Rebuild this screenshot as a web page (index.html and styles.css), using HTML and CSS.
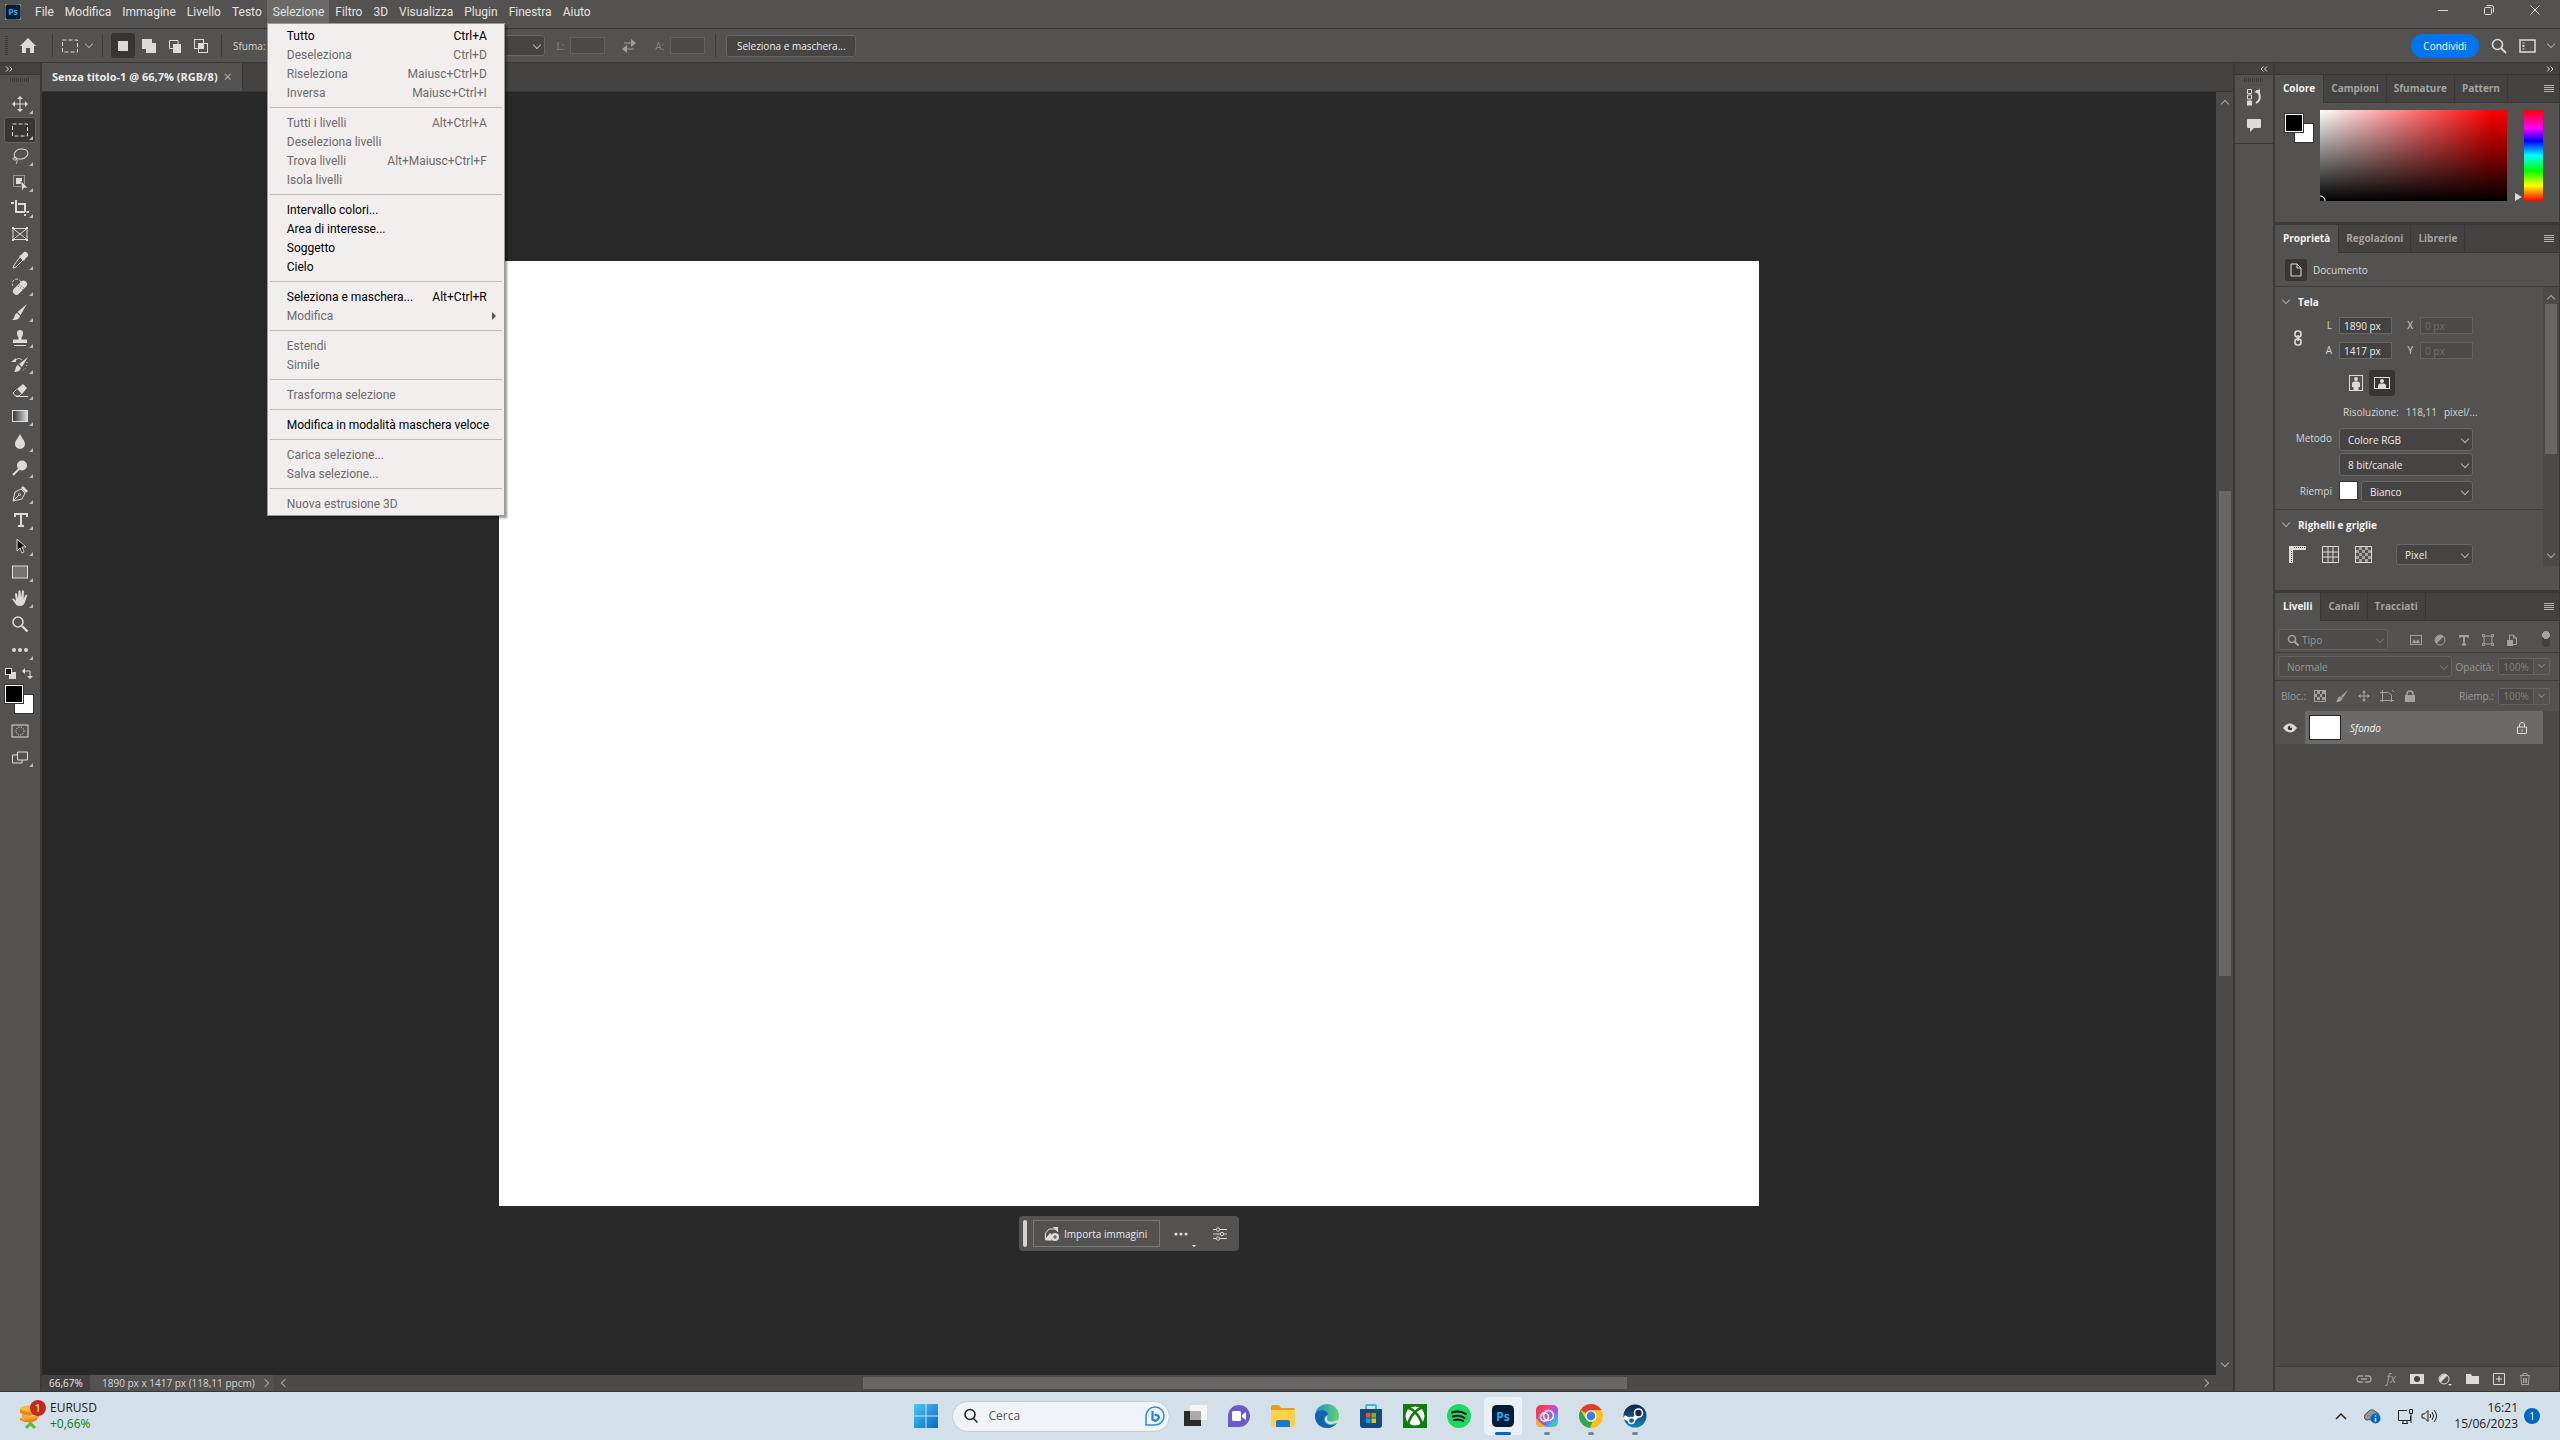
FILE: index.html
```html
<!DOCTYPE html>
<html lang="it">
<head>
    <meta charset="utf-8">
    <title>Senza titolo-1 @ 66,7% (RGB/8)</title>
    <link rel="stylesheet" href="styles.css">
</head>
<body>

    <!-- Menu bar -->
    <header class="menubar">
        <svg class="ps-logo" width="16" height="16" viewBox="0 0 24 24"><rect width="24" height="24" rx="4" fill="#001e36"/><text x="12" y="17" text-anchor="middle" class="logo-text">Ps</text></svg>
        <nav class="menus">
            <button>File</button>
            <button>Modifica</button>
            <button>Immagine</button>
            <button>Livello</button>
            <button>Testo</button>
            <div class="menu-open">
                <button class="current">Selezione</button>
                <ul class="dropdown">
                    <li><button>Tutto <span>Ctrl+A</span></button></li>
                    <li><button disabled>Deseleziona <span>Ctrl+D</span></button></li>
                    <li><button disabled>Riseleziona <span>Maiusc+Ctrl+D</span></button></li>
                    <li><button disabled>Inversa <span>Maiusc+Ctrl+I</span></button></li>
                    <li class="sep"></li>
                    <li><button disabled>Tutti i livelli <span>Alt+Ctrl+A</span></button></li>
                    <li><button disabled>Deseleziona livelli</button></li>
                    <li><button disabled>Trova livelli <span>Alt+Maiusc+Ctrl+F</span></button></li>
                    <li><button disabled>Isola livelli</button></li>
                    <li class="sep"></li>
                    <li><button>Intervallo colori...</button></li>
                    <li><button>Area di interesse...</button></li>
                    <li><button>Soggetto</button></li>
                    <li><button>Cielo</button></li>
                    <li class="sep"></li>
                    <li><button>Seleziona e maschera... <span>Alt+Ctrl+R</span></button></li>
                    <li><button class="has-sub" disabled>Modifica</button></li>
                    <li class="sep"></li>
                    <li><button disabled>Estendi</button></li>
                    <li><button disabled>Simile</button></li>
                    <li class="sep"></li>
                    <li><button disabled>Trasforma selezione</button></li>
                    <li class="sep"></li>
                    <li><button>Modifica in modalità maschera veloce</button></li>
                    <li class="sep"></li>
                    <li><button disabled>Carica selezione...</button></li>
                    <li><button disabled>Salva selezione...</button></li>
                    <li class="sep"></li>
                    <li><button disabled>Nuova estrusione 3D</button></li>
                </ul>
            </div>
            <button>Filtro</button>
            <button>3D</button>
            <button>Visualizza</button>
            <button>Plugin</button>
            <button>Finestra</button>
            <button>Aiuto</button>
        </nav>
        <div class="window-buttons">
            <button aria-label="Riduci"><svg width="12" height="12" viewBox="0 0 12 12"><path d="M1 6.5h10"/></svg></button>
            <button aria-label="Ripristina"><svg width="12" height="12" viewBox="0 0 12 12"><rect x="1.5" y="3.5" width="7" height="7" rx="1"/><path d="M3.5 1.5h5a2 2 0 0 1 2 2v5"/></svg></button>
            <button aria-label="Chiudi"><svg width="12" height="12" viewBox="0 0 12 12"><path d="M1.5 1.5l9 9M10.5 1.5l-9 9"/></svg></button>
        </div>
    </header>

    <!-- Options bar -->
    <div class="options">
        <span class="grip-v"></span>
        <button class="opt-home" aria-label="Home"><svg width="18" height="18" viewBox="0 0 18 18"><path class="fill" d="M9 1L1 9h2v7h4v-5h4v5h4V9h2z"/></svg></button>
        <span class="divider"></span>
        <button class="opt-tool" aria-label="Selezione rettangolare"><svg width="18" height="16" viewBox="0 0 18 16"><rect x="1.5" y="2" width="15" height="12" stroke-dasharray="4 2"/></svg><i class="chevron"></i></button>
        <span class="divider"></span>
        <div class="modes">
            <button class="on" aria-label="Nuova selezione"><svg width="16" height="16" viewBox="0 0 16 16"><rect class="fill" x="3" y="3" width="10" height="10"/></svg></button>
            <button aria-label="Aggiungi"><svg width="16" height="16" viewBox="0 0 16 16"><path class="fill" d="M1 1h10v4h4v10H5v-4H1z"/></svg></button>
            <button aria-label="Sottrai"><svg width="16" height="16" viewBox="0 0 16 16"><path class="fill" d="M6 6h8v9H6z"/><path d="M11 6V2.5H2.5v8H6"/></svg></button>
            <button aria-label="Interseca"><svg width="16" height="16" viewBox="0 0 16 16"><rect x="1.5" y="1.5" width="9" height="9"/><rect x="5.5" y="5.5" width="9" height="9"/><path class="fill" d="M6 6h4v4H6z"/></svg></button>
        </div>
        <span class="divider"></span>
        <label for="feather">Sfuma:</label>
        <input id="feather" class="field feather" value="0 px">
        <span class="select style-select"><select aria-label="Stile"><option>Normale</option></select></span>
        <label class="dim" for="opt-w">L:</label>
        <input id="opt-w" class="field small dim-field" disabled>
        <svg class="swap" width="16" height="14" viewBox="0 0 16 14"><path d="M3 4h9M13 10H4"/><path class="fill" d="M10 0l5 4-5 4zM6 6l-5 4 5 4z"/></svg>
        <label class="dim" for="opt-h">A:</label>
        <input id="opt-h" class="field small dim-field" disabled>
        <span class="divider"></span>
        <button class="mask-btn">Seleziona e maschera...</button>
        <div class="options-right">
            <button class="share">Condividi</button>
            <svg width="16" height="16" viewBox="0 0 16 16"><circle cx="6.5" cy="6.5" r="5" stroke-width="1.6"/><path d="M10 10l5 5" stroke-width="1.8"/></svg>
            <svg width="17" height="14" viewBox="0 0 17 14"><rect x="1" y="1" width="15" height="12" stroke-width="1.5"/><path d="M4.5 3.5v1M4.5 6v2M4.5 9.5v1" stroke-width="2"/></svg>
            <i class="chevron"></i>
        </div>
    </div>

    <main class="workspace">

        <!-- Tools -->
        <aside class="toolbar">
            <div class="dock-head left"><svg width="8" height="6" viewBox="0 0 8 6"><path d="M1 .5l2.5 2.5L1 5.5M4.5.5L7 3 4.5 5.5"/></svg></div>
            <span class="grip-h"></span>
            <button aria-label="Sposta"><svg width="18" height="18" viewBox="0 0 18 18"><path d="M9 2v14M2 9h14"/><path class="fill" d="M9 1l3 3H6zM9 17l3-3H6zM1 9l3-3v6zM17 9l-3-3v6z"/></svg></button>
            <button class="on" aria-label="Selezione rettangolare"><svg width="18" height="18" viewBox="0 0 18 18"><rect x="1.5" y="3" width="15" height="12" stroke-dasharray="4 2"/></svg></button>
            <button aria-label="Lazo"><svg width="18" height="18" viewBox="0 0 18 18"><ellipse cx="10" cy="7" rx="7" ry="5" transform="rotate(-12 10 7)"/><path d="M4 10c-3 1-2 3 0 3s2-3-1-2M5 12c2 1 1 3 0 5"/></svg></button>
            <button aria-label="Selezione oggetto"><svg width="18" height="18" viewBox="0 0 18 18"><rect x="2.5" y="2.5" width="11" height="11" stroke-dasharray="1 1"/><path class="fill" d="M5 5h6v6H5z"/><path d="M10 8l7 7h-4l-2 3z" style="fill:#dcdbda;stroke:#535250;stroke-width:.6"/></svg></button>
            <button aria-label="Taglierina"><svg width="18" height="18" viewBox="0 0 18 18"><path d="M0 4h3M5 1v12h9M7 5h7v8M14 15v2M15.5 13H18" stroke-width="2"/></svg></button>
            <button class="plain" aria-label="Cornice"><svg width="18" height="18" viewBox="0 0 18 18"><path d="M2 3.5h14v11H2zM2 3.5l14 11M16 3.5l-14 11"/><path class="fill" d="M1 2h2v2H1zM15 2h2v2h-2zM1 14h2v2H1zM15 14h2v2h-2z"/></svg></button>
            <button aria-label="Contagocce"><svg width="18" height="18" viewBox="0 0 18 18"><path d="M9 6l3 3-7 7-3 1 1-3z"/><path class="fill" d="M8 5l2-1 3-3c2-1 5 2 4 4l-3 3-1 2z"/></svg></button>
            <button aria-label="Pennello correttivo"><svg width="18" height="18" viewBox="0 0 18 18"><path stroke-dasharray="2.5 1.5" d="M2 9a4.5 4.5 0 1 1 8-4"/><rect class="fill" x="0" y="7" width="17" height="7" rx="3.5" transform="rotate(-45 9 10)"/><path stroke="#535250" stroke-dasharray="1 1.5" d="M7 9l5 4M8.5 7.5l5 4"/></svg></button>
            <button aria-label="Pennello"><svg width="18" height="18" viewBox="0 0 18 18"><path class="fill" d="M16 1L6.5 9l3 3zM6 10l3 3c-1 4-4 4-8 4 3-2 2-6 5-7z"/></svg></button>
            <button aria-label="Timbro clone"><svg width="18" height="18" viewBox="0 0 18 18"><path class="fill" d="M7.5 9C7 7 5.5 6 6 4a3 3 0 0 1 6 0c.5 2-1 3-1.5 5v1.5H15q1 0 1 1V14H2v-2.5q0-1 1-1h4.5z"/><path d="M3 16.5h12"/></svg></button>
            <button aria-label="Pennello storia"><svg width="18" height="18" viewBox="0 0 18 18"><path class="fill" d="M17 2L8 9l3 3zM7 10l3 3c-1 3-4 4-7 4 2-2 1-6 4-7zM0 7l5-4v4z"/><path d="M4 6c2-3 5-3 7-1"/><path stroke-dasharray="1 2" d="M16 7c0 4-1 7-5 9"/></svg></button>
            <button aria-label="Gomma"><svg width="18" height="18" viewBox="0 0 18 18"><path class="fill" d="M6 8l6-5 4 4-5 6z"/><path d="M5.5 8.5L2 12l2.5 3H8l3-3"/><path d="M5 15.5h12"/></svg></button>
            <button aria-label="Sfumatura"><svg width="18" height="18" viewBox="0 0 18 18"><defs><linearGradient id="grad"><stop offset="0" stop-color="#333"/><stop offset="1" stop-color="#ddd"/></linearGradient></defs><rect x="1.5" y="3.5" width="15" height="11" style="fill:url(#grad)"/></svg></button>
            <button aria-label="Sfoca"><svg width="18" height="18" viewBox="0 0 18 18"><path class="fill" d="M9 1c2 4 5 7 5 10a5 5 0 0 1-10 0c0-3 3-6 5-10z"/></svg></button>
            <button aria-label="Scherma"><svg width="18" height="18" viewBox="0 0 18 18"><circle class="fill" cx="11" cy="6.5" r="5"/><path d="M8 10l-6 6" stroke-width="2"/></svg></button>
            <button aria-label="Penna"><svg width="18" height="18" viewBox="0 0 18 18"><path d="M2 16l2-9 6-3 4 4-3 6zM2 16l6-6"/><circle cx="8.5" cy="9.5" r="1"/><path class="fill" d="M10 3l2-2 5 5-2 2z"/></svg></button>
            <button aria-label="Testo"><svg width="18" height="18" viewBox="0 0 18 18"><path d="M4 6V3h12v3M10 3v12M7 15h6" stroke-width="2"/></svg></button>
            <button aria-label="Selezione tracciato"><svg width="18" height="18" viewBox="0 0 18 18"><path d="M6 2v12l3-3 2 5 2-1-2-5h4z" style="fill:#111"/></svg></button>
            <button aria-label="Rettangolo"><svg width="18" height="18" viewBox="0 0 18 18"><rect x="1.5" y="3" width="15" height="12" style="fill:#747371"/></svg></button>
            <button aria-label="Mano"><svg width="18" height="18" viewBox="0 0 18 18"><path class="fill" d="M1 10q1-1 2 0l2 2-1-7q1-2 2 0l1 5 .5-8q1-1.5 2 0l.5 7 1-7q1-1.5 2 0l-.5 8 2-4q2-1 1.5 1l-2 6q-1 4-5 4-4 0-5-3z"/></svg></button>
            <button class="plain" aria-label="Zoom"><svg width="18" height="18" viewBox="0 0 18 18"><circle cx="7" cy="7" r="5" stroke-width="1.6"/><path d="M11 11l5.5 5.5" stroke-width="2.4"/></svg></button>
            <button aria-label="Altro"><svg width="18" height="18" viewBox="0 0 18 18"><circle class="fill" cx="3" cy="9" r="2"/><circle class="fill" cx="9" cy="9" r="2"/><circle class="fill" cx="15" cy="9" r="2"/></svg></button>
            <div class="mini-colors">
                <svg width="11" height="11" viewBox="0 0 11 11"><path class="fill" d="M4 4h7v7H4z"/><rect x=".5" y=".5" width="6" height="6" style="fill:#111"/></svg>
                <svg width="11" height="11" viewBox="0 0 11 11"><path d="M2 3h6v6"/><path class="fill" d="M0 3l3-3v6zM8 11l3-3H5z"/></svg>
            </div>
            <div class="swatches"><span class="fore"></span><span class="back"></span></div>
            <button class="plain" aria-label="Maschera veloce"><svg width="18" height="18" viewBox="0 0 18 18"><rect x="1" y="3" width="16" height="12"/><circle cx="9" cy="9" r="4" stroke-dasharray="1.2 1.2"/></svg></button>
            <button aria-label="Modalità schermo"><svg width="18" height="18" viewBox="0 0 18 18"><path d="M6 7H1.5v8H11v-3M6.5 4h10v8h-10z"/></svg></button>
        </aside>

        <!-- Document -->
        <section class="document">
            <div class="doc-tabs"><div class="doc-tab">Senza titolo-1 @ 66,7% (RGB/8) <button aria-label="Chiudi">×</button></div></div>
            <div class="doc-body">
                <div class="stage">
                    <div class="artboard"></div>
                    <div class="context-bar">
                        <span class="handle"></span>
                        <button class="import"><svg width="16" height="16" viewBox="0 0 16 16"><path d="M8 14H1.5V7L5 3h7l2 3"/><path class="fill" d="M2 12l4-5 3 3-2 4H2zM9 1h5v5z"/><circle class="fill" cx="11" cy="11" r="4"/><path stroke="#535250" d="M11 9v4M9 11h4"/></svg>Importa immagini</button>
                        <button class="more" aria-label="Altro"><svg width="14" height="4" viewBox="0 0 14 4"><circle class="fill" cx="2" cy="2" r="1.6"/><circle class="fill" cx="7" cy="2" r="1.6"/><circle class="fill" cx="12" cy="2" r="1.6"/></svg></button>
                        <button class="tune" aria-label="Proprietà"><svg width="16" height="14" viewBox="0 0 16 14"><path d="M1 2.5h3M8 2.5h7M1 7h7M12 7h3M1 11.5h3M8 11.5h7"/><circle cx="6" cy="2.5" r="1.7"/><circle cx="10" cy="7" r="1.7"/><circle cx="6" cy="11.5" r="1.7"/></svg></button>
                    </div>
                </div>
                <div class="vscroll"><i class="chevron up"></i><div class="track"><div class="thumb"></div></div><i class="chevron"></i></div>
            </div>
            <footer class="status">
                <span class="zoom">66,67%</span>
                <span class="info">1890 px x 1417 px (118,11 ppcm)<i class="chevron right"></i></span>
                <i class="chevron left"></i>
                <div class="track"><div class="thumb"></div></div>
                <i class="chevron right"></i>
            </footer>
        </section>

        <!-- Collapsed panels -->
        <aside class="strip">
            <div class="dock-head"><svg width="8" height="6" viewBox="0 0 8 6"><path d="M3.5.5L1 3l2.5 2.5M7 .5L4.5 3 7 5.5"/></svg></div>
            <div class="strip-body">
                <span class="grip-h"></span>
                <button aria-label="Storia"><svg width="18" height="18" viewBox="0 0 18 18"><path d="M2.5 1.5h4v4h-4zM2.5 7h4v4h-4z"/><path class="fill" d="M2 12.5h5v5H2zM9 4l6-3v5z"/><path d="M11 3c5 2 5 9 0 12" stroke-width="2"/></svg></button>
                <button aria-label="Commenti"><svg width="18" height="18" viewBox="0 0 18 18"><path class="fill" d="M3 3h12q1 0 1 1v7q0 1-1 1H9l-4 4v-4H3q-1 0-1-1V4q0-1 1-1z"/></svg></button>
            </div>
        </aside>

        <aside class="panels">
            <div class="dock-head"><svg width="8" height="6" viewBox="0 0 8 6"><path d="M1 .5l2.5 2.5L1 5.5M4.5.5L7 3 4.5 5.5"/></svg></div>

            <section class="panel color-panel">
                <div class="tabs"><button class="on">Colore</button><button>Campioni</button><button>Sfumature</button><button>Pattern</button><i class="burger"></i></div>
                <div class="color-body">
                    <div class="swatches"><span class="fore"></span><span class="back"></span></div>
                    <div class="spectrum"></div>
                    <i class="hue-pointer"></i>
                    <div class="hue"></div>
                </div>
            </section>

            <section class="panel props-panel">
                <div class="tabs"><button class="on">Proprietà</button><button>Regolazioni</button><button>Librerie</button><i class="burger"></i></div>
                <div class="doc-row"><span class="doc-icon"><svg width="14" height="16" viewBox="0 0 14 16"><path d="M2 2h6l4 4v8H2zM8 2v4h4"/></svg></span>Documento</div>
                <div class="props-scroll">
                    <div class="props">
                        <h3><i class="chevron"></i>Tela</h3>
                        <div class="props-grid">
                            <svg class="link" width="10" height="16" viewBox="0 0 10 16"><rect x="2" y="1" width="6" height="6" rx="2.5" stroke-width="1.6"/><rect x="2" y="9" width="6" height="6" rx="2.5" stroke-width="1.6"/><path d="M5 5v6" stroke-width="1.6"/></svg>
                            <label for="w">L</label><input id="w" class="field" value="1890 px">
                            <label for="x">X</label><input id="x" class="field dim-field" value="0 px" disabled>
                            <label class="second" for="h">A</label><input id="h" class="field" value="1417 px">
                            <label for="y">Y</label><input id="y" class="field dim-field" value="0 px" disabled>
                            <div class="orient wide">
                                <button aria-label="Verticale"><svg width="16" height="18" viewBox="0 0 16 18"><rect x="1.5" y="1.5" width="13" height="15"/><circle class="fill" cx="8" cy="5" r="2"/><path class="fill" d="M4 13v-3q0-2.5 2.5-2.5h3Q12 7.5 12 10v3h-1.5v3h-5v-3z"/></svg></button>
                                <button class="on" aria-label="Orizzontale"><svg width="18" height="14" viewBox="0 0 18 14"><rect x="1.5" y="1.5" width="15" height="11"/><circle class="fill" cx="9" cy="5" r="2"/><path class="fill" d="M5 12v-2q0-2.5 2.5-2.5h3Q13 7.5 13 10v2z"/></svg></button>
                            </div>
                            <div class="resolution wide"><span>Risoluzione:</span><span>118,11</span><span>pixel/...</span></div>
                            <label class="row-label" for="mode">Metodo</label>
                            <span class="select wide"><select id="mode"><option>Colore RGB</option></select></span>
                            <span class="select wide"><select aria-label="Profondità"><option>8 bit/canale</option></select></span>
                            <label class="row-label" for="fill">Riempi</label>
                            <div class="fill-row wide"><span class="fill-chip"></span><span class="select short"><select id="fill"><option>Bianco</option></select></span></div>
                        </div>
                        <h3 class="ruled"><i class="chevron"></i>Righelli e griglie</h3>
                        <div class="rulers">
                            <svg width="17" height="17" viewBox="0 0 17 17"><path class="fill" d="M0 0h17v4H4v13H0z"/><path stroke="#535250" stroke-dasharray="1 1" d="M5 1.5h11M2.5 5v11"/></svg>
                            <svg width="17" height="17" viewBox="0 0 17 17"><path d="M.5.5h16v16H.5zM6 0v17M11 0v17M0 6h17M0 11h17"/></svg>
                            <svg width="17" height="17" viewBox="0 0 17 17"><rect x=".5" y=".5" width="16" height="16"/><path style="fill:#a5a4a2" stroke="none" d="M4 1h3v3H4zM10 1h3v3h-3zM1 4h3v3H1zM7 4h3v3H7zM13 4h3v3h-3zM4 7h3v3H4zM10 7h3v3h-3zM1 10h3v3H1zM7 10h3v3H7zM13 10h3v3h-3zM4 13h3v3H4zM10 13h3v3h-3z"/></svg>
                            <span class="select short units"><select aria-label="Unità"><option>Pixel</option></select></span>
                        </div>
                    </div>
                    <div class="vscroll"><i class="chevron up"></i><div class="track"><div class="thumb"></div></div><i class="chevron"></i></div>
                </div>
            </section>

            <section class="panel layers-panel">
                <div class="tabs"><button class="on">Livelli</button><button>Canali</button><button>Tracciati</button><i class="burger"></i></div>
                <div class="layer-row filters">
                    <span class="select faded kind"><svg width="12" height="12" viewBox="0 0 12 12"><circle cx="5" cy="5" r="3.5" stroke-width="1.6"/><path d="M7.5 7.5l4 4" stroke-width="2"/></svg><select aria-label="Filtro"><option>Tipo</option></select></span>
                    <div class="filter-icons">
                        <svg width="12" height="12" viewBox="0 0 12 12"><rect x=".5" y="1.5" width="11" height="9"/><path class="fill" d="M2 9l2-4 2 3 2-3 2 4z"/></svg>
                        <svg width="12" height="12" viewBox="0 0 12 12"><circle cx="6" cy="6" r="5"/><path class="fill" d="M9.5 2.5l-7 7a5 5 0 0 1 7-7z"/></svg>
                        <svg width="12" height="12" viewBox="0 0 12 12"><path d="M2 4V2h8v2M6 2v8.5M4 10.5h4" stroke-width="1.8"/></svg>
                        <svg width="12" height="12" viewBox="0 0 12 12"><path d="M2 2h8v8H2z"/><path d="M.5.5h2v2h-2zM9.5.5h2v2h-2zM.5 9.5h2v2h-2zM9.5 9.5h2v2h-2z"/></svg>
                        <svg width="12" height="12" viewBox="0 0 12 12"><path d="M3.5 6V1h4l3 3v6.5H7M7.5 1v3h3"/><path class="fill" d="M1 6h6v6H1z"/></svg>
                    </div>
                    <span class="toggle"></span>
                </div>
                <div class="layer-row blend">
                    <span class="select faded"><select aria-label="Metodo di fusione"><option>Normale</option></select></span>
                    <label for="opacity">Opacità:</label>
                    <span class="percent"><input id="opacity" value="100%" disabled><i class="chevron"></i></span>
                </div>
                <div class="layer-row locks">
                    <span>Bloc.:</span>
                    <div class="lock-icons">
                        <svg width="12" height="12" viewBox="0 0 12 12"><rect x=".5" y=".5" width="11" height="11"/><path class="fill" d="M3 1h3v3H3zM8 1h3v3H8zM1 4h2v3H1zM6 4h2v3H6zM3 7h3v3H3zM8 7h3v3H8z"/></svg>
                        <svg width="12" height="12" viewBox="0 0 12 12"><path class="fill" d="M12 0L5 6l2 2zM4.5 6.5l2 2C6 11 4 12 0 12c2-2 1-5 4.5-5.5z"/></svg>
                        <svg width="12" height="12" viewBox="0 0 18 18"><path d="M9 2v14M2 9h14" stroke-width="1.5"/><path class="fill" d="M9 0l3 4H6zM9 18l3-4H6zM0 9l4-3v6zM18 9l-4-3v6z"/></svg>
                        <svg width="14" height="12" viewBox="0 0 14 12"><path d="M0 2.5h8M2.5 0v12M0 10.5h14M11.5 12V5l-3-2.5M12 0l2 2"/></svg>
                        <svg width="12" height="12" viewBox="0 0 12 12"><path class="fill" d="M1 5h10v7H1z"/><path d="M3 5V4q0-3 3-3t3 3v1" stroke-width="1.5"/></svg>
                    </div>
                    <label for="fill-op">Riemp.:</label>
                    <span class="percent"><input id="fill-op" value="100%" disabled><i class="chevron"></i></span>
                </div>
                <div class="layer-list">
                    <div class="layer">
                        <span class="eye"><svg width="14" height="10" viewBox="0 0 14 10"><path class="fill" d="M0 5q7-9 14 0-7 9-14 0z"/><circle cx="7" cy="5" r="2.3" style="fill:#333" stroke="none"/><circle cx="8" cy="4" r="1" class="fill"/></svg></span>
                        <div class="layer-main"><span class="thumbnail"></span><em>Sfondo</em><svg width="12" height="14" viewBox="0 0 12 14"><path d="M1.5 6h9v6.5h-9zM3.5 6V4q0-2.5 2.5-2.5T8.5 4v2M6 8.5v2"/></svg></div>
                    </div>
                </div>
                <div class="layer-foot">
                    <svg class="off" width="16" height="14" viewBox="0 0 16 14"><path d="M7 4H4a3 3 0 0 0 0 6h3M9 4h3a3 3 0 0 1 0 6H9M5 7h6" stroke-width="1.3"/></svg>
                    <em class="off">fx</em>
                    <svg width="14" height="12" viewBox="0 0 14 12"><path class="fill" d="M0 1h14v10H0z"/><circle cx="7" cy="6" r="3" style="fill:#444" stroke="none"/></svg>
                    <svg width="14" height="14" viewBox="0 0 14 14"><circle cx="6" cy="7" r="5"/><path class="fill" d="M9.5 3.5l-7 7a5 5 0 0 1 7-7zM10 12h4l-2 2z"/></svg>
                    <svg width="13" height="12" viewBox="0 0 13 12"><path class="fill" d="M0 1h5l1 2h7v8H0z"/></svg>
                    <svg width="12" height="12" viewBox="0 0 12 12"><path d="M.5.5h11v11H.5zM6 3v6M3 6h6"/></svg>
                    <svg class="off" width="12" height="14" viewBox="0 0 12 14"><path d="M1 3.5h10M4 3V1.5h4V3M2 4l.5 8.500h7L10 4M4.5 6v5M6 6v5M7.5 6v5"/></svg>
                </div>
            </section>
        </aside>
    </main>

    <!-- Windows taskbar -->
    <footer class="taskbar">
        <div class="widget">
            <svg width="30" height="32" viewBox="0 0 30 32"><ellipse cx="11" cy="9" rx="9" ry="3.5" fill="#ffb93b"/><path d="M2 9v4q9 6 18 0V9q-9 6-18 0z" fill="#e98a16"/><path d="M4 14v4q9 6 17 0v-4q-9 5-17 0z" fill="#f9a32b"/><path d="M2 18v2q9 5 17 0v-3q-9 5-17 1z" fill="#e98a16"/><path d="M8 28l4.5-4.5L17 28" fill="none" stroke="#5dbb2e" stroke-width="3"/><circle cx="20" cy="8" r="8" fill="#c42b1c"/><text x="20" y="12" text-anchor="middle" class="badge-text">1</text></svg>
            <div><span>EURUSD</span><span class="up">+0,66%</span></div>
        </div>
        <div class="apps">
            <button aria-label="Start"><svg width="24" height="24" viewBox="0 0 24 24"><defs><linearGradient id="win" x2="1" y2="1"><stop offset="0" stop-color="#4cc8f5"/><stop offset="1" stop-color="#0669c4"/></linearGradient></defs><path fill="url(#win)" d="M0 0h11.5v11.5H0zM12.5 0H24v11.5H12.5zM0 12.5h11.5V24H0zM12.5 12.5H24V24H12.5z"/></svg></button>
            <div class="search">
                <svg width="16" height="16" viewBox="0 0 16 16" fill="none" stroke="#222" stroke-width="1.6"><circle cx="7" cy="6.5" r="5"/><path d="M10.5 10.5l4 4"/></svg>
                <input aria-label="Cerca" placeholder="Cerca">
                <svg width="20" height="20" viewBox="0 0 20 20" fill="none"><path d="M1 19v-9a9 9 0 1 1 9 9z" stroke="#2b8fdc" stroke-width="1.5"/><path d="M7.5 5v8.5l3 1.5 3-2.5q1-2-1-3l-3-1" stroke="#1787e0" stroke-width="2.2"/></svg>
            </div>
            <button aria-label="Attività"><svg width="24" height="24" viewBox="0 0 24 24"><path fill="#2b2b2b" d="M1 7h17v15H1z"/><path fill="#f6f6f6" d="M7 1h17v15H7z"/><path fill="#aaa" d="M7 7h11v9H7z"/></svg></button>
            <button aria-label="Chat"><svg width="24" height="24" viewBox="0 0 24 24"><path fill="#6a5cc8" d="M1 23V12A11 11 0 1 1 12 23z"/><rect x="5" y="7" width="9" height="10" rx="1.5" fill="#fff"/><path fill="#fff" d="M15 11l4-3v8l-4-3z"/></svg></button>
            <button aria-label="Esplora file"><svg width="26" height="24" viewBox="0 0 26 24"><path fill="#e0a021" d="M1 3q0-2 2-2h6l2 3h12q2 0 2 2v4H1z"/><path fill="#ffd04c" d="M1 6h24v15q0 2-2 2H3q-2 0-2-2z"/><path fill="#1979ca" d="M6 23v-5q0-2 2-2h10q2 0 2 2v5z"/></svg></button>
            <button aria-label="Edge"><svg width="26" height="26" viewBox="0 0 26 26"><defs><linearGradient id="edge" x2="1"><stop offset="0" stop-color="#1a8fd8"/><stop offset="1" stop-color="#62d46d"/></linearGradient></defs><circle cx="13" cy="13" r="12" fill="url(#edge)"/><path fill="#1363b0" d="M1 13c0-7 13-8 13-1-3 0-5 4-3 7 3 4 8 4 12 1-4 6-12 6-17 3-3-2-5-6-5-10z"/><path fill="#d3dfe9" d="M14 12q-2 3 0 6 4 2 9-1 3 3-2 3-7 3-10-2-1-4 3-6z"/></svg></button>
            <button aria-label="Store"><svg width="26" height="26" viewBox="0 0 26 26"><path d="M8 7V3q0-1 1-1h8q1 0 1 1v4" fill="none" stroke="#3cb4ee" stroke-width="2"/><path fill="#154a7d" d="M2 6h22v16q0 3-3 3H5q-3 0-3-3z"/><path fill="#f25022" d="M8 10h4.5v4.5H8z"/><path fill="#7fba00" d="M13.5 10H18v4.5h-4.5z"/><path fill="#00a4ef" d="M8 15.5h4.5V20H8z"/><path fill="#ffb900" d="M13.5 15.5H18V20h-4.5z"/></svg></button>
            <button aria-label="Xbox"><svg width="24" height="24" viewBox="0 0 24 24"><path fill="#107c10" d="M0 0h24v24H0z"/><circle cx="12" cy="12" r="9.5" fill="#fff"/><path d="M5 21C6 15 10 10 12 8c2 2 6 7 7 13M5 4q3 0 7 4 4-4 7-4" fill="none" stroke="#107c10" stroke-width="2.5"/></svg></button>
            <button aria-label="Spotify"><svg width="24" height="24" viewBox="0 0 24 24"><circle cx="12" cy="12" r="12" fill="#1ed760"/><path d="M5 8.5q7-2.5 14 1.5M6 12.5q6-2 11.5 1.5M7 16q5-1.5 9 1" fill="none" stroke="#111" stroke-width="2" stroke-linecap="round"/></svg></button>
            <button class="active" aria-label="Photoshop"><svg width="22" height="22" viewBox="0 0 24 24"><rect width="24" height="24" rx="5" fill="#001e36"/><text x="12" y="17" text-anchor="middle" class="logo-text">Ps</text></svg></button>
            <button class="running" aria-label="Creative Cloud"><svg width="22" height="22" viewBox="0 0 22 22"><defs><linearGradient id="cc" x2="1" y2="1"><stop offset="0" stop-color="#f0322c"/><stop offset=".35" stop-color="#f0458c"/><stop offset=".6" stop-color="#8c5cf0"/><stop offset=".8" stop-color="#3bb8e8"/><stop offset="1" stop-color="#6cd23c"/></linearGradient></defs><rect width="22" height="22" rx="5" fill="url(#cc)"/><path d="M0 13v4q0 5 5 5h6q-7-3-11-9z" fill="#f9b225"/><circle cx="8.5" cy="12" r="4" fill="none" stroke="#fff" stroke-width="1.6"/><circle cx="12.5" cy="10.5" r="5" fill="none" stroke="#fff" stroke-width="1.6"/></svg></button>
            <button class="running" aria-label="Chrome"><svg width="24" height="24" viewBox="0 0 24 24"><circle cx="12" cy="12" r="12" fill="#fbc116"/><path fill="#e33b2e" d="M1.6 6A12 12 0 0 1 22.4 6H12a6 6 0 0 0-5.2 3z"/><path fill="#2da94f" d="M1.6 6l5.2 9a6 6 0 0 0 6.7 2.8L11 24A12 12 0 0 1 1.6 6z"/><circle cx="12" cy="12" r="5.6" fill="#fff"/><circle cx="12" cy="12" r="4.4" fill="#3a7de9"/></svg></button>
            <button class="running" aria-label="Steam"><svg width="24" height="24" viewBox="0 0 24 24"><defs><linearGradient id="steam" x2="0" y2="1"><stop offset="0" stop-color="#111d42"/><stop offset="1" stop-color="#1487bd"/></linearGradient></defs><circle cx="12" cy="12" r="11.5" fill="url(#steam)"/><path d="M1 13l8 4 6-6" stroke="#fff" stroke-width="4" fill="none"/><circle cx="15.5" cy="9" r="4" fill="#152a55" stroke="#fff" stroke-width="1.6"/><circle cx="8.5" cy="16.5" r="3" fill="#13628f" stroke="#fff" stroke-width="1.3"/></svg></button>
        </div>
        <div class="tray">
            <svg width="12" height="8" viewBox="0 0 12 8" fill="none" stroke="#222" stroke-width="1.5"><path d="M1 7l5-5 5 5"/></svg>
            <svg width="18" height="16" viewBox="0 0 18 16"><path d="M3 12a4 4 0 0 1 1-7q4-6 9-1 4 1 3 7z" fill="#9a9496" stroke="#555"/><circle cx="12.5" cy="10.5" r="5" fill="#0067c0"/><path d="M12.5 10v3.5M12.5 7.5v1" stroke="#fff" stroke-width="1.5"/></svg>
            <svg width="17" height="17" viewBox="0 0 17 17" fill="none" stroke="#222"><path d="M10 2.5H1.5v10h12V8M5 15.5h6M6 13v2M10 13v2M12.5 1.5h3v4h-3zM14 6v9"/></svg>
            <svg width="17" height="14" viewBox="0 0 17 14" fill="none" stroke="#222"><path d="M1 5h2.5L7 1.5v11L3.5 9H1zM9 5q1.5 2 0 4M11 3q3 4 0 8M13 1q5 6 0 12"/></svg>
            <div class="clock"><span>16:21</span><span>15/06/2023</span></div>
            <span class="count">1</span>
        </div>
    </footer>

</body>
</html>
```
FILE: styles.css
```css
* {
    box-sizing: border-box;
}

body {
    margin: 0;
    height: 100vh;
    display: flex;
    flex-direction: column;
    overflow: hidden;
    background: #535250;
    color: #d6d5d4;
    font-family: 'Open Sans', 'Noto Sans', sans-serif;
    font-size: 10px;
    line-height: 16px;
}

button, input, select {
    font: inherit;
    color: inherit;
    margin: 0;
    padding: 0;
    border: none;
    background: none;
    border-radius: 0;
}

svg {
    display: block;
    flex: none;
}

.menubar svg, .options svg, .workspace svg {
    fill: none;
    stroke: #dcdbda;
}

svg .fill {
    fill: #dcdbda;
    stroke: none;
}

.logo-text {
    font: bold 13px 'Open Sans', sans-serif;
    fill: #31a8ff;
    stroke: none;
}

.chevron {
    flex: none;
    width: 6px;
    height: 6px;
    margin: 0 3px;
    border: solid #a9a8a7;
    border-width: 0 1px 1px 0;
    transform: translateY(-2px) rotate(45deg);
}

.chevron.up {
    transform: translateY(2px) rotate(225deg);
}

.chevron.left {
    transform: rotate(135deg);
}

.chevron.right {
    transform: rotate(-45deg);
}

/* Menu bar */
.menubar {
    display: flex;
    height: 28px;
    flex: none;
    padding: 0 2px 0 5px;
    font-family: Roboto, 'Open Sans', sans-serif;
    font-size: 12px;
    color: #e4e3e2;
}

.ps-logo {
    margin: 4px 8px 0 0;
}

.menus {
    display: flex;
    height: 23px;
}

.menus > button, .menu-open > button {
    padding: 0 5px 0 6px;
    height: 23px;
}

.menu-open {
    position: relative;
}

.menu-open .current {
    background: #6b6a68;
}

.dropdown {
    position: absolute;
    z-index: 5;
    top: 23px;
    left: 0;
    width: 238px;
    margin: 0;
    padding: 2px 1px;
    list-style: none;
    background: #f2eeed;
    border: 1px solid #9b9a99;
    box-shadow: 2px 2px 2px rgba(0, 0, 0, 0.4);
}

.dropdown button {
    display: flex;
    justify-content: space-between;
    align-items: center;
    width: 100%;
    height: 19px;
    padding: 0 16px 0 18px;
    color: #000;
    white-space: nowrap;
}

.dropdown button:disabled {
    color: #6d6b6b;
}

.dropdown .has-sub::after {
    content: "";
    margin-right: -9px;
    border: 4px solid transparent;
    border-left-color: #555;
    border-right: none;
}

.dropdown .sep {
    height: 1px;
    margin: 5px 1px;
    background: #c1bbba;
}

.window-buttons {
    display: flex;
    margin-left: auto;
}

.window-buttons button {
    display: flex;
    justify-content: center;
    width: 46px;
    padding-top: 4px;
}

/* Options bar */
.options {
    display: flex;
    align-items: center;
    flex: none;
    height: 35px;
    border-top: 1px solid #383736;
    border-bottom: 1px solid #383736;
}

.grip-v {
    width: 3px;
    height: 20px;
    margin: 0 11px 0 5px;
    background: repeating-linear-gradient(#3b3a39 0 1px, transparent 1px 2px);
}

.divider {
    width: 1px;
    height: 23px;
    background: #3b3a39;
}

.opt-home {
    margin-right: 15px;
}

.opt-tool {
    display: flex;
    align-items: center;
    gap: 4px;
    margin: 0 7px 0 8px;
}

.modes {
    display: flex;
    gap: 2px;
    margin: 0 8px;
}

.modes button {
    width: 24px;
    height: 25px;
    padding: 0 4px;
    border-radius: 3px;
}

.modes .on {
    background: #373635;
}

.options label {
    margin-left: 11px;
}

.options .dim {
    color: #8a8987;
}

.field {
    height: 17px;
    padding: 0 4px;
    border: 1px solid #686765;
    background: #434241;
    color: #ecebea;
}

.dim-field {
    border-color: #636260;
    background: #4b4a48;
    color: #6f6e6c;
}

.feather {
    width: 60px;
    margin-left: 6px;
}

.small {
    width: 35px;
    margin-left: 6px;
}

.select {
    display: flex;
    align-items: center;
    position: relative;
    height: 23px;
    border: 1px solid #686765;
    border-radius: 3px;
    background: #454442;
    color: #ecebea;
}

.select select {
    appearance: none;
    flex: 1;
    width: 100%;
    height: 100%;
    padding: 0 8px;
}

.select::after {
    content: "";
    position: absolute;
    right: 4px;
    top: 50%;
    width: 5px;
    height: 5px;
    border: solid #b5b4b3;
    border-width: 0 1px 1px 0;
    transform: translateY(-4px) rotate(45deg);
}

.style-select {
    width: 204px;
    height: 21px;
    margin-left: 10px;
}

.options .swap {
    margin-left: 16px;
    stroke: #a09f9d;
}

.swap .fill {
    fill: #a09f9d;
}

.options .swap + label {
    margin-left: 18px;
}

.options .small + .divider {
    margin: 0 10px;
}

.mask-btn {
    width: 130px;
    height: 22px;
    border: 1px solid #666563;
    border-radius: 3px;
    background: #464543;
    color: #ecebea;
}

.options-right {
    display: flex;
    align-items: center;
    gap: 12px;
    margin-left: auto;
    padding-right: 3px;
}

.options-right .chevron {
    margin-left: 0;
}

.share {
    height: 24px;
    width: 68px;
    border-radius: 12px;
    background: #0073ee;
    color: #fff;
}

/* Workspace */
.workspace {
    display: flex;
    flex: 1;
    min-height: 0;
    border-bottom: 1px solid #383736;
}

.dock-head {
    display: flex;
    align-items: center;
    justify-content: flex-end;
    flex: none;
    height: 12px;
    padding: 0 5px;
    border-bottom: 1px solid #383736;
    background: #434241;
}

.dock-head.left {
    align-self: stretch;
    justify-content: flex-start;
}

.toolbar {
    display: flex;
    flex-direction: column;
    align-items: center;
    flex: none;
    width: 42px;
    border-right: 2px solid #3b3a39;
}

.grip-h {
    flex: none;
    width: 20px;
    height: 4px;
    margin: 3px 0 9px;
    background: repeating-linear-gradient(90deg, #3b3a39 0 1px, transparent 1px 2px);
}

.toolbar button {
    position: relative;
    flex: none;
    display: flex;
    align-items: center;
    justify-content: center;
    width: 32px;
    height: 26px;
    border-radius: 3px;
}

.toolbar .on {
    background: #373635;
    box-shadow: inset 0 0 0 1px #656462;
}

.toolbar button::after {
    content: "";
    position: absolute;
    right: 3px;
    bottom: 3px;
    border: 2px solid transparent;
    border-right-color: #bbb;
    border-bottom-color: #bbb;
}

.toolbar .plain::after {
    display: none;
}

.mini-colors {
    display: flex;
    gap: 6px;
    width: 31px;
    padding: 5px 0;
}

.swatches {
    display: flex;
    width: 30px;
    height: 30px;
}

.swatches span {
    flex: none;
    width: 20px;
    height: 20px;
    border: 1px solid #333;
}

.swatches .fore {
    z-index: 1;
    border: 2px solid #fff;
    background: #000;
    outline: 1px solid #333;
    outline-offset: -1px;
}

.swatches .back {
    margin: 10px 0 0 -10px;
    background: #fff;
}

.toolbar .swatches {
    width: 32px;
    height: 29px;
    margin-bottom: 5px;
}

/* Document */
.document {
    display: flex;
    flex-direction: column;
    flex: 1;
    min-width: 0;
}

.doc-tabs {
    display: flex;
    flex: none;
    height: 29px;
    background: #434241;
    border-bottom: 1px solid #383736;
}

.doc-tab {
    display: flex;
    align-items: center;
    gap: 6px;
    padding: 0 10px;
    border-right: 1px solid #383736;
    background: #535250;
    color: #ecebea;
    font-size: 11px;
    font-weight: bold;
}

.doc-tab button {
    font-size: 14px;
    font-weight: normal;
    color: #b5b4b3;
}

.doc-body {
    display: flex;
    flex: 1;
    min-height: 0;
}

.stage {
    position: relative;
    display: flex;
    align-items: center;
    justify-content: center;
    flex: 1;
    background: #282828;
}

.artboard {
    width: 1260px;
    height: 945px;
    background: #fffefe;
}

.context-bar {
    position: absolute;
    bottom: 124px;
    left: 50%;
    transform: translateX(-50%);
    display: flex;
    align-items: center;
    width: 220px;
    height: 35px;
    padding: 4px;
    border-radius: 4px;
    background: #535250;
}

.handle {
    width: 4px;
    height: 27px;
    border-radius: 2px;
    background: #d6d1cf;
}

.import {
    display: flex;
    align-items: center;
    gap: 4px;
    width: 127px;
    height: 27px;
    margin-left: 6px;
    padding-left: 10px;
    border: 1px solid #7b7a78;
    color: #ecebea;
}

.more {
    position: relative;
    margin-left: 14px;
}

.more::after {
    content: "";
    position: absolute;
    right: -8px;
    top: 13px;
    border: 2px solid transparent;
    border-top-color: #fff;
}

.tune {
    margin-left: 24px;
}

.vscroll {
    display: flex;
    flex-direction: column;
    align-items: center;
    flex: none;
    width: 16px;
    padding: 7px 0;
    background: #4b4a48;
}

.vscroll .track {
    flex: 1;
    width: 12px;
    margin: 4px 0;
}

.vscroll .thumb {
    height: 150px;
    background: #686765;
}

.doc-body .vscroll {
    width: 17px;
}

.doc-body .thumb {
    height: 485px;
    margin-top: 382px;
}

.status {
    display: flex;
    align-items: center;
    flex: none;
    height: 16px;
    padding-right: 22px;
    background: #4b4a48;
}

.status .zoom {
    width: 48px;
    padding-left: 7px;
    background: #434241;
    color: #ecebea;
}

.status .info {
    display: flex;
    align-items: center;
    justify-content: space-between;
    width: 184px;
    margin-right: 5px;
    padding: 0 3px 0 12px;
    background: #535250;
}

.status .track {
    flex: 1;
}

.status .thumb {
    width: 40%;
    height: 12px;
    margin-left: 30%;
    background: #686765;
}

/* Right side */
.strip {
    display: flex;
    flex-direction: column;
    flex: none;
    width: 42px;
    border-left: 2px solid #3b3a39;
    border-right: 2px solid #3b3a39;
}

.strip-body {
    display: flex;
    flex-direction: column;
    align-items: center;
    height: 69px;
    border-bottom: 1px solid #383736;
}

.strip button {
    height: 28px;
}

.strip-body .grip-h {
    margin-bottom: 1px;
}

.panels {
    display: flex;
    flex-direction: column;
    flex: none;
    width: 285px;
    border-right: 1px solid #383736;
}

.panel {
    display: flex;
    flex-direction: column;
    flex: none;
    border-bottom: 3px solid #3b3a39;
}

.tabs {
    display: flex;
    flex: none;
    height: 28px;
    border-bottom: 1px solid #383736;
    background: #434241;
}

.tabs button {
    padding: 0 7px 2px;
    border-right: 1px solid #383736;
    color: #a3a2a0;
    font-weight: bold;
}

.tabs .on {
    margin-bottom: -1px;
    padding: 0 8px 3px;
    background: #535250;
    color: #f4f3f2;
}

.burger {
    width: 10px;
    height: 8px;
    margin: 10px 5px 0 auto;
    background: repeating-linear-gradient(#b5b4b3 0 1px, transparent 1px 2px);
}

.color-panel {
    height: 150px;
}

.color-body {
    display: flex;
    align-items: flex-start;
    padding: 7px 16px 0 9px;
}

.color-body .swatches {
    margin: 3px 6px 0 0;
}

.spectrum {
    flex: 1;
    height: 91px;
    background: radial-gradient(circle at 0 100%, transparent 4px, #fff 5px, transparent 6px), linear-gradient(to bottom, transparent, #000), linear-gradient(to right, #fff, #f00 92%);
}

.hue-pointer {
    align-self: flex-end;
    margin: 0 2px 0 8px;
    border: 4px solid transparent;
    border-left: 7px solid #dcdbda;
    border-right: none;
}

.hue {
    width: 19px;
    height: 91px;
    background: linear-gradient(#f00, #f0f 20%, #00f 34%, #0ff 50%, #0f0 67%, #ff0 83%, #f00);
}

.props-panel {
    height: 368px;
}

.doc-row {
    display: flex;
    align-items: center;
    gap: 6px;
    height: 34px;
    padding-left: 10px;
    border-bottom: 1px solid #3f3e3d;
}

.doc-icon {
    padding: 3px 4px;
    border-radius: 3px;
    background: #373635;
}

.props-scroll {
    display: flex;
    height: 279px;
}

.props {
    flex: 1;
}

.props h3 {
    display: flex;
    align-items: center;
    height: 30px;
    margin: 0;
    padding-left: 5px;
    gap: 6px;
    color: #f4f3f2;
    font-size: 10px;
}

.props .ruled {
    border-top: 1px solid #3f3e3d;
}

.props-grid {
    display: grid;
    grid-template-columns: 36px 14px 53px 14px 53px;
    grid-template-rows: 25px 28px 34px 24px 25px 28px 28px;
    column-gap: 7px;
    align-items: start;
    text-align: right;
}

.props-grid .field {
    width: 53px;
}

.link {
    grid-row: 1 / 3;
    justify-self: end;
    margin-top: 13px;
    margin-right: 8px;
}

.second {
    grid-column: 2;
}

.wide {
    grid-column: 3 / 6;
}

.row-label {
    grid-column: 1 / 3;
    padding-top: 2px;
}

.orient {
    display: flex;
    gap: 4px;
}

.orient button {
    display: flex;
    align-items: center;
    justify-content: center;
    width: 26px;
    height: 26px;
    border-radius: 3px;
}

.orient button:first-child {
    padding-left: 8px;
}

.orient .on {
    background: #373635;
}

.resolution {
    display: flex;
    gap: 7px;
    padding-left: 4px;
}

.fill-row {
    display: flex;
    gap: 3px;
}

.fill-chip {
    width: 19px;
    height: 19px;
    border: 1px solid #333;
    background: #fffefe;
}

.select.short {
    flex: 1;
    height: 21px;
}

.rulers {
    display: flex;
    align-items: center;
    gap: 16px;
    padding: 5px 0 0 14px;
}

.select.units {
    flex: none;
    width: 77px;
    margin-left: 8px;
}

/* Layers */
.layers-panel {
    flex: 1;
    min-height: 0;
    border-bottom: none;
}

.layer-row {
    display: flex;
    align-items: center;
    flex: none;
    height: 28px;
    padding: 0 9px 0 3px;
    border-bottom: 1px solid #3f3e3d;
    color: #9a9997;
}

.layer-row svg, .layer-foot .off {
    stroke: #a3a2a0;
}

.layer-row svg .fill {
    fill: #a3a2a0;
}

.layer-row.filters {
    height: 32px;
    padding-top: 6px;
}

.select.faded {
    height: 21px;
    background: #4d4c4a;
    border-color: #646361;
    color: #9a9997;
}

.select.faded::after {
    border-color: #777674;
}

.kind {
    width: 110px;
    padding-left: 8px;
}

.kind select {
    padding-left: 3px;
}

.filter-icons {
    display: flex;
    gap: 12px;
    margin-left: 22px;
}

.toggle {
    width: 8px;
    height: 16px;
    margin: -2px 0 0 auto;
    border-radius: 4px;
    background: radial-gradient(circle at 4px 4px, #a3a2a0 4px, #424140 4px);
}

.blend .select {
    width: 174px;
}

.layer-row label {
    margin-left: auto;
}

.percent {
    display: flex;
    align-items: center;
    width: 52px;
    height: 17px;
    margin-left: 4px;
    border: 1px solid #646361;
    border-radius: 2px;
}

.percent input {
    width: 35px;
    height: 15px;
    border-right: 1px solid #646361;
    background: #4b4a48;
    color: #858482;
    text-align: center;
}

.percent .chevron {
    width: 5px;
    height: 5px;
    margin-left: 5px;
    border-color: #858482;
}

.layer-row.locks {
    height: 30px;
    padding-left: 6px;
    border-bottom: none;
}

.lock-icons {
    display: flex;
    gap: 10px;
    margin-left: 8px;
}

.layer-list {
    flex: 1;
    background: #4b4a48;
}

.layer {
    display: flex;
    height: 33px;
    margin-right: 16px;
    background: #535250;
}

.eye {
    display: flex;
    align-items: center;
    justify-content: center;
    width: 30px;
}

.layer-main {
    display: flex;
    align-items: center;
    flex: 1;
    padding: 0 15px 0 4px;
    background: #6b6a68;
    color: #f4f3f2;
}

.layer-main svg {
    margin-left: auto;
}

.thumbnail {
    width: 32px;
    height: 25px;
    margin-right: 9px;
    border: 1px solid #222;
    background: #fffefe;
}

.layer-foot {
    display: flex;
    align-items: center;
    justify-content: flex-end;
    flex: none;
    gap: 14px;
    height: 25px;
    padding-right: 28px;
    border-top: 1px solid #3f3e3d;
}

.layer-foot em {
    color: #a3a2a0;
    font: italic 12px/16px 'Open Sans', sans-serif;
}

/* Taskbar */
.taskbar {
    display: grid;
    grid-template-columns: 1fr auto 1fr;
    align-items: center;
    flex: none;
    height: 48px;
    background: #d3dfe9;
    color: #1b1b1b;
    font-size: 12px;
}

.widget {
    display: flex;
    gap: 2px;
    padding-left: 18px;
}

.widget div, .clock {
    display: flex;
    flex-direction: column;
}

.up {
    color: #0f7b0f;
}

.badge-text {
    font: 11px 'Open Sans', sans-serif;
    fill: #fff;
}

.apps {
    display: flex;
    align-items: center;
}

.apps button {
    position: relative;
    display: flex;
    align-items: center;
    justify-content: center;
    width: 44px;
    height: 48px;
}

.apps .active {
    width: 38px;
    height: 38px;
    margin: 0 3px;
    border-radius: 4px;
    background: #eaf0f6;
}

.apps .active::after, .apps .running::after {
    content: "";
    position: absolute;
    bottom: 0;
    width: 16px;
    height: 3px;
    border-radius: 2px;
    background: #0067c0;
}

.apps .running::after {
    bottom: 5px;
    width: 6px;
    background: #80858a;
}

.search {
    display: flex;
    align-items: center;
    gap: 10px;
    width: 218px;
    height: 31px;
    margin: 0 3px 0 4px;
    padding: 0 4px 0 10px;
    border: 1px solid #c3ced8;
    border-radius: 16px;
    background: #f0f4f9;
}

.search input {
    flex: 1;
    min-width: 0;
}

.search input::placeholder {
    color: #555;
}

.tray {
    display: flex;
    align-items: center;
    justify-content: flex-end;
    padding-right: 20px;
}

.tray svg {
    margin-right: 16px;
}

.tray svg:nth-child(3) {
    margin-right: 7px;
}

.clock {
    text-align: right;
}

.count {
    width: 16px;
    height: 16px;
    margin-left: 6px;
    border-radius: 8px;
    background: #0067c0;
    color: #fff;
    font-size: 10px;
    text-align: center;
}
```
